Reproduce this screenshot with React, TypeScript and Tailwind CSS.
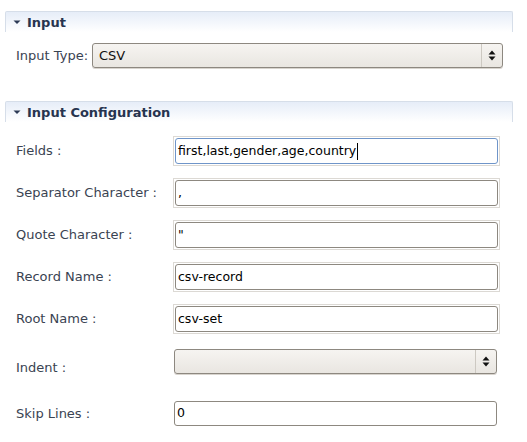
const font = { fontFamily: '"DejaVu Sans", "Liberation Sans", sans-serif' };

function SectionHeader({ title }: { title: string }) {
  return (
    <div className="mx-[5px] flex h-[21px] w-[508px] items-center rounded-t-[2px] border-x border-t border-[#d6dee9] bg-gradient-to-b from-[#e6edf8] to-white">
      <svg width="8" height="6" viewBox="0 0 8 6" className="ml-[7px] mr-[6px]">
        <path d="M0.5 1.5 L7.5 1.5 L4 5 Z" fill="#2c3a55" />
      </svg>
      <span className="text-[13px] font-bold leading-none text-[#27344f]">{title}</span>
    </div>
  );
}

function Arrows() {
  return (
    <div className="flex h-full items-center border-l border-[#cdc9c2] pl-[6px] pr-[6px]">
      <svg width="8" height="11" viewBox="0 0 8 11">
        <path d="M4 0.5 L7.5 4.5 L0.5 4.5 Z" fill="#111" />
        <path d="M0.5 6.5 L7.5 6.5 L4 10.5 Z" fill="#111" />
      </svg>
    </div>
  );
}

function Combo({ value, className }: { value: string; className: string }) {
  return (
    <div
      className={`flex shrink-0 items-center rounded-[3px] border border-[#8d8880] bg-gradient-to-b from-[#f6f4f1] to-[#e9e6e1] shadow-[0_1px_0_#d8d4ce] ${className}`}
    >
      <span className="flex-1 pl-[6px] text-[13px] text-[#111]">{value}</span>
      <Arrows />
    </div>
  );
}

function FramedInput({ value, focused }: { value: string; focused?: boolean }) {
  return (
    <div className="h-[30px] w-[327px] border border-[#dcd9d4] p-px">
      <div
        className={`flex h-full items-center rounded-[3px] border bg-white pl-[2px] text-[12.5px] text-black ${
          focused ? "border-[#6f95c9]" : "border-[#8d8880]"
        }`}
      >
        {value}
        {focused ? <span className="ml-px inline-block h-[17px] w-px bg-black" /> : null}
      </div>
    </div>
  );
}

function Row({ label, children, h, labelPad = 0 }: { label: string; children: React.ReactNode; h: number; labelPad?: number }) {
  return (
    <div className="flex items-center" style={{ height: h }}>
      <div className="w-[173px] shrink-0 whitespace-nowrap pl-[16px] text-[13px] text-[#3a4352]" style={{ paddingTop: labelPad }}>
        {label}
      </div>
      {children}
    </div>
  );
}

export default function App() {
  return (
    <div className="h-[442px] w-[527px] overflow-hidden bg-white" style={font}>
      <div className="h-[11px]" />
      <SectionHeader title="Input" />
      <div className="mt-[11px] flex h-[25px] items-center">
        <span className="w-[92px] shrink-0 whitespace-nowrap pl-[16px] text-[13px] text-[#3a4352]">Input Type:</span>
        <Combo value="CSV" className="h-[25px] w-[411px]" />
      </div>
      <div className="h-[33px]" />
      <SectionHeader title="Input Configuration" />
      <div className="h-[14px]" />
      <Row label="Fields :" h={30}>
        <FramedInput value="first,last,gender,age,country" focused />
      </Row>
      <div className="h-[12px]" />
      <Row label="Separator Character :" h={30}>
        <FramedInput value="," />
      </Row>
      <div className="h-[12px]" />
      <Row label="Quote Character :" h={30}>
        <FramedInput value={'"'} />
      </Row>
      <div className="h-[12px]" />
      <Row label="Record Name :" h={30}>
        <FramedInput value="csv-record" />
      </Row>
      <div className="h-[12px]" />
      <Row label="Root Name :" h={30}>
        <FramedInput value="csv-set" />
      </Row>
      <div className="h-[15px]" />
      <Row label="Indent :" h={25} labelPad={12}>
        <div className="pl-px">
          <Combo value="" className="h-[25px] w-[323px]" />
        </div>
      </Row>
      <div className="h-[27px]" />
      <Row label="Skip Lines :" h={25}>
        <div className="pl-px">
          <div className="flex h-[25px] w-[323px] items-center rounded-[3px] border border-[#8d8880] bg-white pl-[2px] text-[12.5px] text-black">
            0
          </div>
        </div>
      </Row>
    </div>
  );
}
